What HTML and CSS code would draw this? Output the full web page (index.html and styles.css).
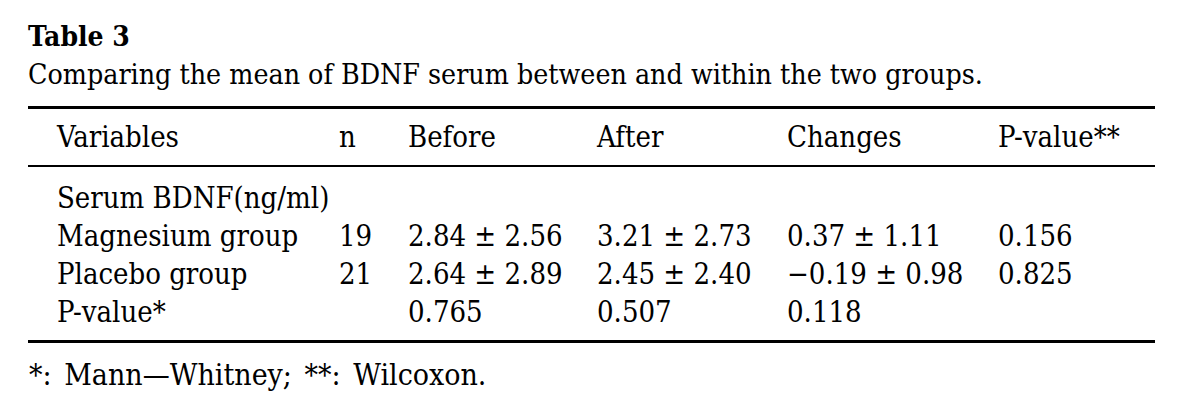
FILE: index.html
```html
<!DOCTYPE html>
<html>
<head>
    <link rel="stylesheet" href="styles.css">
</head>
<body>
    <div class="table-wrap">
        <div class="table-label">Table 3</div>
        <div class="table-caption">Comparing the mean of BDNF serum between and within the two groups.</div>
        <table class="data-table">
            <colgroup>
                <col class="col-var">
                <col class="col-n">
                <col class="col-before">
                <col class="col-after">
                <col class="col-changes">
                <col class="col-p">
            </colgroup>
            <thead>
                <tr>
                    <th class="first">Variables</th>
                    <th>n</th>
                    <th>Before</th>
                    <th>After</th>
                    <th>Changes</th>
                    <th>P-value**</th>
                </tr>
            </thead>
            <tbody>
                <tr>
                    <td class="first">Serum BDNF(ng/ml)</td>
                    <td></td>
                    <td></td>
                    <td></td>
                    <td></td>
                    <td></td>
                </tr>
                <tr>
                    <td class="first">Magnesium group</td>
                    <td>19</td>
                    <td>2.84 &plusmn; 2.56</td>
                    <td>3.21 &plusmn; 2.73</td>
                    <td>0.37 &plusmn; 1.11</td>
                    <td>0.156</td>
                </tr>
                <tr>
                    <td class="first">Placebo group</td>
                    <td>21</td>
                    <td>2.64 &plusmn; 2.89</td>
                    <td>2.45 &plusmn; 2.40</td>
                    <td>&minus;0.19 &plusmn; 0.98</td>
                    <td>0.825</td>
                </tr>
                <tr>
                    <td class="first">P-value*</td>
                    <td></td>
                    <td>0.765</td>
                    <td>0.507</td>
                    <td>0.118</td>
                    <td></td>
                </tr>
            </tbody>
        </table>
        <div class="table-foot">*: Mann&mdash;Whitney; **: Wilcoxon.</div>
    </div>
</body>
</html>
```

FILE: styles.css
```css
body {
    margin: 0;
    background-color: #fff;
    color: #000;
    font-family: "DejaVu Serif Condensed", "DejaVu Serif", serif;
    font-stretch: condensed;
}

.table-wrap {
    padding: 18px 0 0 28px;
    width: 1127px;
}

.table-label {
    font-size: 28px;
    font-weight: bold;
    line-height: 38px;
}

.table-caption {
    font-size: 28.3px;
    line-height: 38px;
    margin-bottom: 12px;
}

.data-table {
    width: 1127px;
    table-layout: fixed;
    border-collapse: collapse;
    border-top: 3px solid #000;
    border-bottom: 3px solid #000;
    font-size: 29px;
    line-height: 38px;
}

.col-var { width: 311px; }
.col-n { width: 69px; }
.col-before { width: 189px; }
.col-after { width: 190px; }
.col-changes { width: 211px; }
.col-p { width: 157px; }

.data-table th,
.data-table td {
    padding: 0;
    text-align: left;
    font-weight: normal;
    white-space: nowrap;
}

.data-table th {
    padding-top: 9px;
    padding-bottom: 9px;
    border-bottom: 2px solid #000;
}

.data-table .first {
    padding-left: 29px;
}

.data-table tbody tr:first-child td {
    padding-top: 12px;
}

.data-table tbody tr:last-child td {
    padding-bottom: 9px;
}

.table-foot {
    font-size: 30px;
    line-height: 38px;
    margin-top: 13px;
    padding-left: 1px;
    word-spacing: 4px;
}
```
